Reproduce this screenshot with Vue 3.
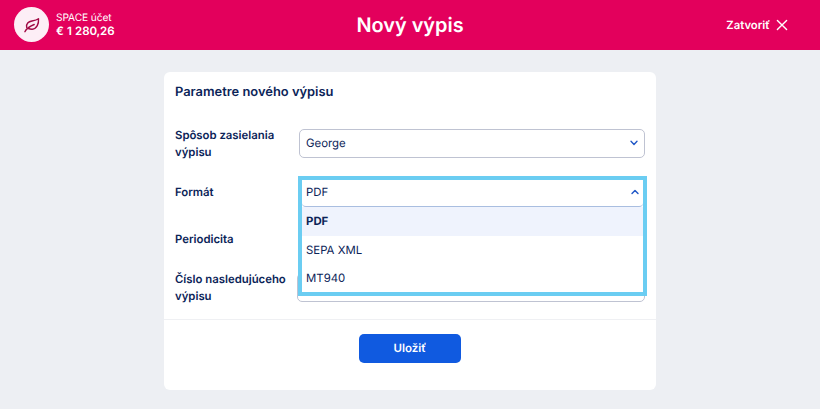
<template>
  <div class="page">
    <header class="topbar">
      <div class="account">
        <div class="avatar">
          <svg viewBox="0 0 18 18" width="18" height="18">
            <path d="M1.9 15.7 C3.2 12.6 6.2 10.5 11.2 8.5" />
            <path d="M3.7 11.4 C2.9 7.6 5.4 5.6 9 5 C12 4.5 13.7 4.2 15.5 2.8 C15.9 7.6 13.9 12.9 9.3 13.2 C7.7 13.3 6.6 13 5.3 12.5" />
          </svg>
        </div>
        <div class="account-text">
          <span>SPACE účet</span>
          <strong>€ 1 280,26</strong>
        </div>
      </div>
      <h1>Nový výpis</h1>
      <button class="close" type="button">
        Zatvoriť
        <svg viewBox="0 0 12 12" width="12" height="12">
          <path d="M1.4 1.4 L10.6 10.6 M10.6 1.4 L1.4 10.6" />
        </svg>
      </button>
    </header>

    <form class="card" @submit.prevent>
      <h2>Parametre nového výpisu</h2>

      <div class="row">
        <label>Spôsob zasielania výpisu</label>
        <div class="select">
          <span>George</span>
          <svg viewBox="0 0 8 6" width="8" height="6"><path d="M1 1.2 L4 4.4 L7 1.2" /></svg>
        </div>
      </div>

      <div class="row">
        <label>Formát</label>
        <div class="select-wrap">
          <div class="dropdown">
            <div class="select open" @click="open = !open">
              <span>{{ format }}</span>
              <svg viewBox="0 0 8 6" width="8" height="6"><path d="M1 4.6 L4 1.4 L7 4.6" /></svg>
            </div>
            <ul v-if="open">
              <li
                v-for="item in formats"
                :key="item"
                :class="{ selected: item === format }"
                @click="format = item"
              >{{ item }}</li>
            </ul>
          </div>
        </div>
      </div>

      <div class="row short">
        <label>Periodicita</label>
      </div>

      <div class="row tall">
        <label>Číslo nasledujúceho výpisu</label>
        <div class="select wide"></div>
      </div>

      <footer>
        <button class="save" type="submit">Uložiť</button>
      </footer>
    </form>
  </div>
</template>

<script setup>
import { ref } from 'vue';

const formats = ['PDF', 'SEPA XML', 'MT940'];
const format = ref('PDF');
const open = ref(true);
</script>

<style>
body {
  background: #edeff3;
}
</style>

<style scoped>
.page {
  height: 409px;
  overflow: hidden;
  background: #edeff3;
  color: #0b2458;
  font-family: Inter, sans-serif;
  font-size: 11.4px;
  text-rendering: geometricPrecision;
}

.topbar {
  display: grid;
  grid-template-columns: 1fr auto 1fr;
  align-items: center;
  height: 49.5px;
  padding: 0 14px;
  box-sizing: border-box;
  background: #e3005c;
  color: #fff;
}

.account {
  display: flex;
  align-items: center;
  gap: 7px;
}

.avatar {
  display: flex;
  align-items: center;
  justify-content: center;
  width: 35px;
  height: 35px;
  border-radius: 50%;
  background: #fdeef6;
}

svg {
  fill: none;
  stroke-linecap: round;
  stroke-linejoin: round;
}

.avatar svg {
  stroke: #a00b45;
  stroke-width: 1.4;
}

.account-text {
  display: flex;
  flex-direction: column;
  font-size: 10.2px;
  letter-spacing: -0.1px;
  line-height: 12.5px;
}

.account-text strong {
  font-size: 11.5px;
  font-weight: 600;
  letter-spacing: -0.1px;
  word-spacing: 0.5px;
}

h1 {
  margin: 0;
  font-size: 19.9px;
  font-weight: 600;
  line-height: 24px;
}

.close {
  display: flex;
  align-items: center;
  justify-self: end;
  gap: 6px;
  margin-right: 18px;
  padding: 0;
  border: none;
  background: none;
  color: #fff;
  font: 600 11.3px Inter, sans-serif;
  text-rendering: geometricPrecision;
}

.close svg {
  stroke: #fff;
  stroke-width: 1.4;
}

.card {
  width: 491.5px;
  height: 318px;
  margin: 22.5px 0 0 164px;
  border-radius: 6px;
  background: #fff;
}

h2 {
  height: 46.5px;
  margin: 0;
  padding: 12px 11px 0;
  box-sizing: border-box;
  font-size: 12.9px;
  font-weight: 600;
  line-height: 18px;
}

.row {
  display: grid;
  grid-template-columns: 124px 1fr;
  align-items: center;
  height: 49px;
  padding: 0 11px;
}

.row.short {
  height: 44px;
}

.row.tall {
  height: 54px;
}

label {
  padding-top: 1px;
  font-size: 11.35px;
  font-weight: 600;
  line-height: 17px;
}

.select {
  display: flex;
  align-items: center;
  justify-content: space-between;
  height: 29px;
  padding: 0 6px;
  box-sizing: border-box;
  border: 1px solid #bfc3d2;
  border-radius: 5px;
}

.select.wide {
  margin-left: -2px;
}

.select svg {
  stroke: #2259c7;
  stroke-width: 1.4;
}

.select-wrap {
  position: relative;
  height: 29px;
}

/* the opened list lies over the rows below it */
.dropdown {
  position: absolute;
  z-index: 1;
  top: -2px;
  left: -1px;
  right: -2px;
  border: 4px solid #6bcdf2;
  background: #fff;
}

.select.open {
  height: 27px;
  padding: 0 4px 2px;
  border-width: 0 0 1px;
  border-color: #a9bee0;
  border-radius: 0 0 4px 4px;
}

ul {
  margin: 0;
  padding: 0;
  list-style: none;
}

li {
  height: 28px;
  padding-left: 4px;
  line-height: 28px;
}

li.selected {
  height: 29px;
  background: #eff3fd;
  font-weight: 700;
  line-height: 29px;
}

footer {
  display: flex;
  justify-content: center;
  margin-top: 4px;
  padding-top: 14px;
  border-top: 1px solid #eff0f3;
}

.save {
  width: 102px;
  height: 29px;
  padding: 0;
  border: none;
  border-radius: 5px;
  background: #105ae0;
  color: #fff;
  font: 600 11.5px Inter, sans-serif;
  text-rendering: geometricPrecision;
}
</style>
